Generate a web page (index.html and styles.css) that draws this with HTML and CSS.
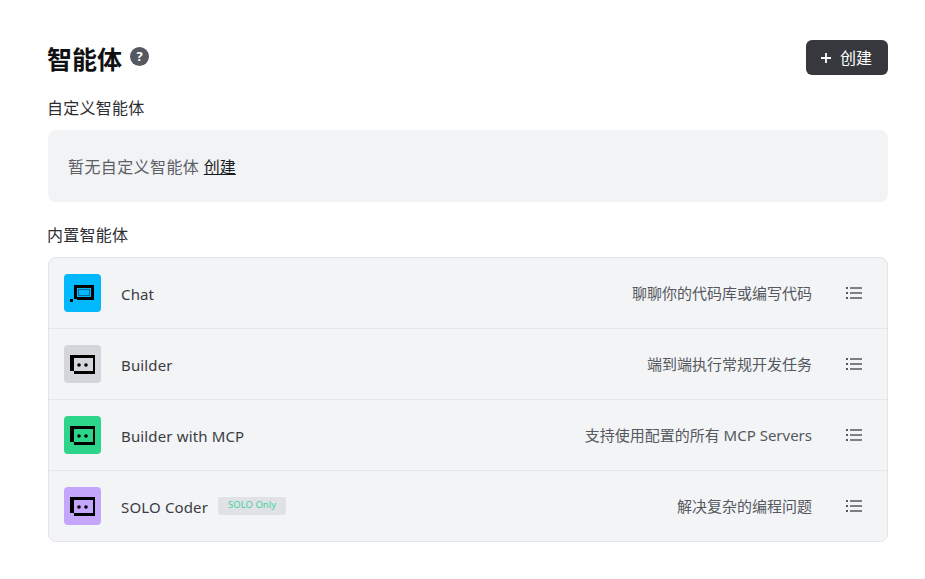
FILE: index.html
```html
<!DOCTYPE html>
<html lang="zh-CN">
<head>
<meta charset="utf-8">
<title>智能体</title>
<link rel="stylesheet" href="styles.css">
</head>
<body>
<main class="page">
  <header class="head">
    <div class="title-wrap">
      <h1 class="title">智能体</h1>
      <span class="help">?</span>
    </div>
    <button class="create"><svg class="plus" width="12" height="12" viewBox="0 0 12 12"><path d="M6 1v10M1 6h10" stroke="#fff" stroke-width="1.8"/></svg><span>创建</span></button>
  </header>
  <h2 class="label">自定义智能体</h2>
  <div class="empty">暂无自定义智能体 <a class="link">创建</a></div>
  <h2 class="label label-second">内置智能体</h2>
  <ul class="list">
    <li class="row">
      <span class="tile tile-chat"><svg width="37" height="38" viewBox="0 0 37 38" shape-rendering="crispEdges"><path d="M10 11h20v15H13v-1h-3z M13 14v9h14v-9z" fill-rule="evenodd" fill="#000"/><path d="M14.5 15.5h11v6h-11z" fill="none" stroke="#000" stroke-opacity=".4"/><path d="M6 25h3v3H6z" fill="#000"/></svg></span>
      <span class="name">Chat</span>
      <span class="desc">聊聊你的代码库或编写代码</span>
      <svg class="menu" width="16" height="14" viewBox="0 0 16 14"><path d="M4 2h12M4 7h12M4 12h12" stroke="#55585e" stroke-width="1.4"/><path d="M0 1h2v2H0zM0 6h2v2H0zM0 11h2v2H0z" fill="#55585e"/></svg>
    </li>
    <li class="row">
      <span class="tile tile-builder"><svg width="37" height="38" viewBox="0 0 37 38"><path d="M6 10h25v19H10v-3H6z M10 13v13h19V13z" fill-rule="evenodd" fill="#000"/><circle cx="15" cy="20" r="1.8" fill="#000"/><circle cx="22" cy="20" r="1.8" fill="#000"/></svg></span>
      <span class="name">Builder</span>
      <span class="desc">端到端执行常规开发任务</span>
      <svg class="menu" width="16" height="14" viewBox="0 0 16 14"><path d="M4 2h12M4 7h12M4 12h12" stroke="#55585e" stroke-width="1.4"/><path d="M0 1h2v2H0zM0 6h2v2H0zM0 11h2v2H0z" fill="#55585e"/></svg>
    </li>
    <li class="row">
      <span class="tile tile-mcp"><svg width="37" height="38" viewBox="0 0 37 38"><path d="M6 10h25v19H10v-3H6z M10 13v13h19V13z" fill-rule="evenodd" fill="#000"/><circle cx="15" cy="20" r="1.8" fill="#000"/><circle cx="22" cy="20" r="1.8" fill="#000"/></svg></span>
      <span class="name">Builder with MCP</span>
      <span class="desc">支持使用配置的所有 MCP Servers</span>
      <svg class="menu" width="16" height="14" viewBox="0 0 16 14"><path d="M4 2h12M4 7h12M4 12h12" stroke="#55585e" stroke-width="1.4"/><path d="M0 1h2v2H0zM0 6h2v2H0zM0 11h2v2H0z" fill="#55585e"/></svg>
    </li>
    <li class="row">
      <span class="tile tile-solo"><svg width="37" height="38" viewBox="0 0 37 38"><path d="M6 10h25v19H10v-3H6z M10 13v13h19V13z" fill-rule="evenodd" fill="#000"/><circle cx="15" cy="20" r="1.8" fill="#000"/><circle cx="22" cy="20" r="1.8" fill="#000"/></svg></span>
      <span class="name">SOLO Coder</span>
      <span class="badge">SOLO Only</span>
      <span class="desc">解决复杂的编程问题</span>
      <svg class="menu" width="16" height="14" viewBox="0 0 16 14"><path d="M4 2h12M4 7h12M4 12h12" stroke="#55585e" stroke-width="1.4"/><path d="M0 1h2v2H0zM0 6h2v2H0zM0 11h2v2H0z" fill="#55585e"/></svg>
    </li>
  </ul>
</main>
</body>
</html>
```
FILE: styles.css
```css
* { box-sizing: border-box; }
html, body { margin: 0; background: #fff; }
body {
  font-family: "Noto Sans", "Noto Sans CJK SC", sans-serif;
  color: #2b2e33;
  overflow: hidden;
}
.page { padding: 40px 37px 0 48px; }
.head { display: flex; justify-content: space-between; align-items: center; height: 35px; }
.title-wrap { display: flex; align-items: center; gap: 8px; margin-left: -1px; }
.title { margin: 2px 0 0; font-size: 25px; font-weight: 700; line-height: 36px; color: #111; }
.help {
  width: 19px; height: 19px; border-radius: 50%; background: #55585f; color: #fff;
  font-size: 13px; font-weight: 700; display: flex; align-items: center; justify-content: center;
  margin-top: -3px;
}
.create {
  display: flex; align-items: center; gap: 8px; width: 82px; height: 35px; padding: 0 0 0 14px;
  background: #36383d; color: #fff; border: 0; border-radius: 6px;
  font: inherit; font-size: 16px; line-height: 20px;
}
.plus { display: block; }
.label { margin: 0 0 0 -1px; font-size: 16px; letter-spacing: .25px; font-weight: 400; line-height: 22px; color: #2b2e33; }
.head + .label { margin-top: 22px; }
.empty {
  margin-top: 11px; height: 72px; padding: 0 20px; display: flex; align-items: center; white-space: pre;
  background: #f2f3f5; border-radius: 8px; font-size: 16px; letter-spacing: .4px; color: #5d6066;
}
.link { color: #1a1c1f; text-decoration: underline; letter-spacing: 0; }
.label-second { margin-top: 22px; }
.list {
  list-style: none; margin: 11px 0 0; padding: 0; background: #f3f4f6;
  border: 1px solid #e1e3e6; border-radius: 8px;
}
.row {
  display: flex; align-items: center; height: 71px; padding: 0 25px 0 15px;
  border-top: 1px solid #e5e6e9;
}
.row:first-child { border-top: 0; height: 70px; }
.tile {
  width: 37px; height: 38px; flex: none; border-radius: 4px; display: flex; align-items: center; justify-content: center;
}
.tile svg { display: block; }
.tile-chat { background: #00b8fb; }
.tile-builder { background: #d4d6db; }
.tile-mcp { background: #2cd58a; }
.tile-solo { background: #c4a6fd; }
.name { margin-left: 20px; font-size: 15px; letter-spacing: .15px; color: #3a3d43; padding-top: 2px; }
.badge {
  margin-left: 10px; width: 68px; height: 18px; display: flex; align-items: center; justify-content: center;
  background: #e0e2e5; border-radius: 2px; color: #3fd39a; font-size: 9.5px; padding-bottom: 3px; letter-spacing: 0;
}
.desc { margin-left: auto; font-size: 15px; color: #55585e; padding-bottom: 1px; }
.menu { margin-left: 34px; flex: none; }
```
